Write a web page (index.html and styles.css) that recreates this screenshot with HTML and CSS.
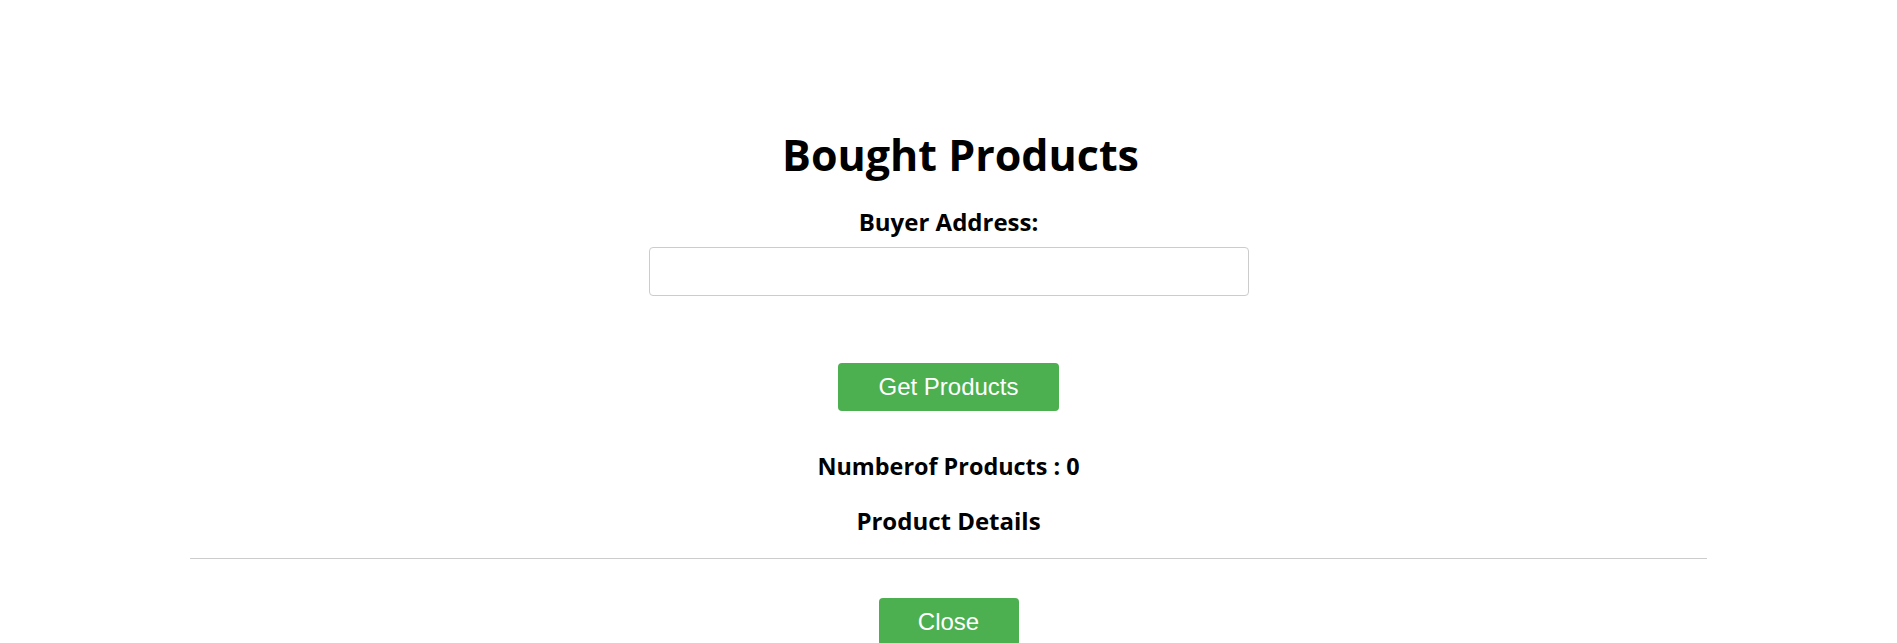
FILE: index.html
```html
<!DOCTYPE html>
<html>
<head>
<meta charset="utf-8">
<link rel="stylesheet" href="styles.css">
</head>
<body>
<main class="page">
  <h1 class="title">Bought Products</h1>
  <label class="label" for="buyer">Buyer Address:</label>
  <input class="address" id="buyer" type="text">
  <button class="btn btn-get">Get Products</button>
  <h3 class="info info-count">Numberof Products : 0</h3>
  <h3 class="info info-details">Product Details</h3>
  <hr class="divider">
  <button class="btn btn-close">Close</button>
</main>
</body>
</html>
```
FILE: styles.css
```css
html, body {
  margin: 0;
  padding: 0;
  background: #fff;
}
body {
  font-family: "Open Sans", "DejaVu Sans", sans-serif;
  color: #000;
}
.page {
  display: flex;
  flex-direction: column;
  align-items: center;
  padding-top: 126px;
}
.title {
  margin: 0 0 0 24px;
  font-size: 43px;
  font-weight: 700;
  line-height: 58px;
}
.label {
  margin-top: 21px;
  font-size: 24px;
  font-weight: 700;
  line-height: 33px;
}
.address {
  box-sizing: border-box;
  margin-top: 9px;
  width: 600px;
  height: 49px;
  border: 1px solid #ccc;
  border-radius: 4px;
  font-size: 20px;
  padding: 0 12px;
}
.btn {
  box-sizing: border-box;
  border: none;
  border-radius: 4px;
  background: #4caf50;
  color: #fff;
  font-family: "Liberation Sans", Arial, sans-serif;
  font-size: 24px;
  height: 48px;
  padding: 0;
}
.btn-get {
  margin-top: 67px;
  width: 221px;
}
.info {
  margin: 0;
  font-size: 24px;
  font-weight: 700;
  line-height: 33px;
}
.info-count {
  margin-top: 39px;
  font-size: 23.4px;
}
.info-details {
  margin-top: 21px;
}
.divider {
  width: 80%;
  margin: 21px 0 0 0;
  border: none;
  border-top: 1px solid #ccc;
  height: 0;
}
.btn-close {
  margin-top: 39px;
  width: 140px;
}
```
